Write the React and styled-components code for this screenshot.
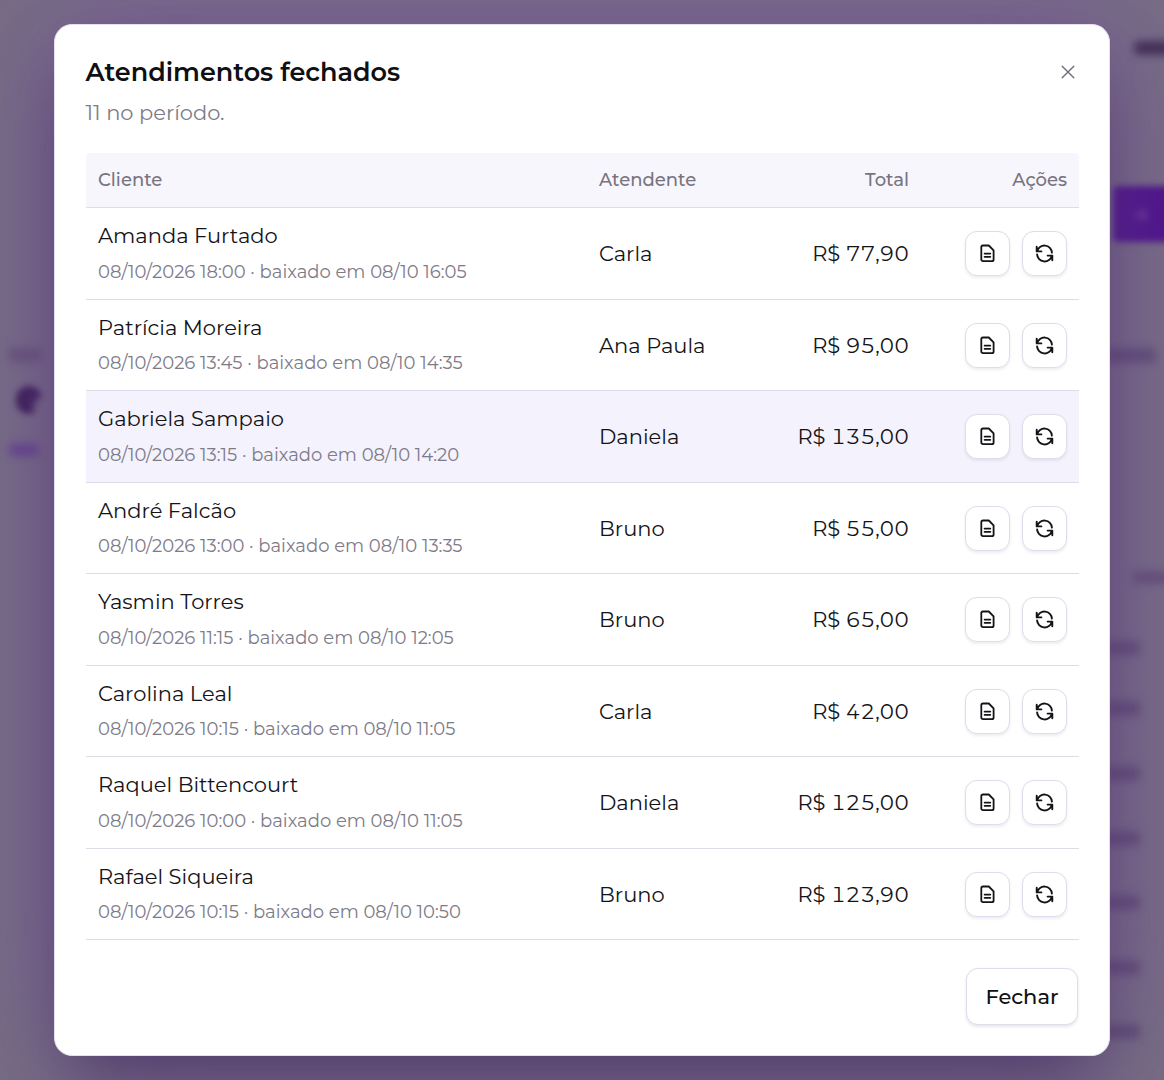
import React from "react";
import styled, { createGlobalStyle } from "styled-components";

const Global = createGlobalStyle`
  * { box-sizing: border-box; }
  html, body { margin: 0; height: 100%; overflow: hidden; }
  body { font-family: Montserrat, Inter, "Open Sans", sans-serif; color: #101013; background: #776e84; }
  button { font: inherit; color: inherit; padding: 0; cursor: pointer; }
`;

const Screen = styled.div`
  display: grid;
  grid-template: 1080px / 1164px;
  overflow: hidden;
  background: #776e84;
`;

const Behind = styled.div`
  grid-area: 1 / 1;
  display: flex;
  justify-content: space-between;
`;

const Edge = styled.div`
  display: flex;
  flex-direction: column;
  width: 60px;
  overflow: hidden;
`;

const Smudge = styled.div`
  flex: none;
  width: ${(p) => p.$w}px;
  height: ${(p) => p.$h}px;
  margin: ${(p) => p.$top}px 0 0 ${(p) => p.$left}px;
  border-radius: ${(p) => p.$r || 5}px;
  background: ${(p) => p.$c || "rgba(66, 38, 92, 0.4)"};
  filter: blur(${(p) => p.$blur || 4}px);
`;

const Dialog = styled.section`
  grid-area: 1 / 1;
  z-index: 1;
  display: flex;
  flex-direction: column;
  width: 1056px;
  height: 1032px;
  margin: 24px 0 0 54px;
  padding: 31px 30px 31px 31px;
  border: 1px solid #e5e0f0;
  border-radius: 18px;
  background: #fff;
  box-shadow:
    0 36px 72px -16px rgba(54, 28, 84, 0.6),
    0 -16px 120px 6px rgba(122, 72, 168, 0.46);

  > * { flex: none; }
`;

const Head = styled.header`
  display: flex;
  justify-content: space-between;
  height: 97px;
  margin-left: -0.5px;
`;

const Title = styled.h2`
  margin: 0;
  font-size: 25.5px;
  font-weight: 600;
  line-height: 32px;
`;

const Subtitle = styled.p`
  margin: 12px 0 0;
  font-size: 21px;
  line-height: 26px;
  color: #7e7b88;
`;

const Close = styled.button`
  display: flex;
  align-items: center;
  justify-content: center;
  width: 22px;
  height: 32px;
  border: 0;
  background: none;
  color: #75717f;
`;

const Table = styled.div`
  display: flex;
  flex-direction: column;
`;

const Row = styled.div`
  display: grid;
  grid-template-columns: 501px 150px 160px 1fr;
  align-items: center;
  height: ${(p) => (p.$header ? 55.2 : 91.5)}px;
  padding: 0 12px;
  border-bottom: 1px solid #dedce7;
  border-radius: ${(p) => (p.$header ? "4px 4px 0 0" : 0)};
  background: ${(p) => (p.$header ? "#f7f6fd" : p.$active ? "#f4f2fc" : "transparent")};
  font-size: ${(p) => (p.$header ? 18 : 21)}px;
  font-weight: ${(p) => (p.$header ? 500 : 400)};
  color: ${(p) => (p.$header ? "#777480" : "#141418")};
`;

const Cell = styled.div`
  display: flex;
  justify-content: ${(p) => (p.$end ? "flex-end" : "flex-start")};
  gap: 12px;
  padding-top: 0.6px;
  font-variant-numeric: tabular-nums;
`;

const Client = styled.div`
  display: flex;
  flex-direction: column;
  gap: 9.5px;
  line-height: 27px;
`;

const Detail = styled.span`
  font-size: 18px;
  line-height: 26px;
  color: #7e7b88;
`;

const IconButton = styled.button`
  display: flex;
  align-items: center;
  justify-content: center;
  width: 45px;
  height: 45px;
  border: 1px solid #e0dcec;
  border-radius: 12px;
  background: #fff;
  box-shadow: 0 1.5px 3px rgba(20, 10, 50, 0.07);
`;

const Foot = styled.footer`
  display: flex;
  justify-content: flex-end;
  padding: 27.4px 1px 0 0;
`;

const FooterButton = styled.button`
  width: 112px;
  height: 57px;
  padding-top: 1px;
  border: 1px solid #e0dcec;
  border-radius: 12px;
  background: #fff;
  box-shadow: 0 1.5px 3px rgba(20, 10, 50, 0.1);
  font-size: 21px;
  font-weight: 500;
`;

const Svg = styled.svg`
  display: block;
  fill: none;
  stroke: currentColor;
  stroke-linecap: round;
  stroke-linejoin: round;
`;

const DocIcon = () => (
  <Svg width="21" height="21" viewBox="0 0 21 21" strokeWidth="1.8">
    <path d="M6 2.5h5.8l4.8 4.9v9a1.7 1.7 0 0 1-1.7 1.7H6a1.7 1.7 0 0 1-1.7-1.7V4.2A1.7 1.7 0 0 1 6 2.5ZM7.6 10.6h5.7M7.6 13.8h5.7" />
  </Svg>
);

const SyncIcon = () => (
  <Svg width="21" height="21" viewBox="0 0 21 21" strokeWidth="1.9">
    <path d="M2.7 3.7v4.7h4.7M3.1 8.2A7.5 7.3 0 0 1 17.9 9.6M18.3 17.3v-4.7h-4.7M17.9 12.8A7.5 7.3 0 0 1 3.1 11.4" />
  </Svg>
);

const rows = [
  ["Amanda Furtado", "08/10/2026 18:00 · baixado em 08/10 16:05", "Carla", "R$ 77,90"],
  ["Patrícia Moreira", "08/10/2026 13:45 · baixado em 08/10 14:35", "Ana Paula", "R$ 95,00"],
  ["Gabriela Sampaio", "08/10/2026 13:15 · baixado em 08/10 14:20", "Daniela", "R$ 135,00"],
  ["André Falcão", "08/10/2026 13:00 · baixado em 08/10 13:35", "Bruno", "R$ 55,00"],
  ["Yasmin Torres", "08/10/2026 11:15 · baixado em 08/10 12:05", "Bruno", "R$ 65,00"],
  ["Carolina Leal", "08/10/2026 10:15 · baixado em 08/10 11:05", "Carla", "R$ 42,00"],
  ["Raquel Bittencourt", "08/10/2026 10:00 · baixado em 08/10 11:05", "Daniela", "R$ 125,00"],
  ["Rafael Siqueira", "08/10/2026 10:15 · baixado em 08/10 10:50", "Bruno", "R$ 123,90"],
];

export default function App() {
  return (
    <Screen>
      <Global />
      <Behind>
        <Edge>
          <Smudge $w={34} $h={14} $top={348} $left={8} $c="rgba(66,38,92,.3)" />
          <Smudge
            $w={26} $h={28} $top={24} $left={16} $r={14} $blur={3}
            $c="radial-gradient(circle at 108% 76%, rgba(58,28,86,0) 20%, rgba(52,24,80,.9) 38%)"
          />
          <Smudge $w={30} $h={12} $top={30} $left={9} $c="rgba(86,36,150,.55)" />
        </Edge>
        <Edge>
          <Smudge $w={40} $h={14} $top={41} $left={30} $c="rgba(45,25,65,.75)" />
          <Smudge
            $w={80} $h={56} $top={131} $left={9} $blur={3}
            $c="radial-gradient(circle at 29px 29px, #642f94 2px, #4c1488 9px)"
          />
          <Smudge $w={52} $h={15} $top={106} $left={0} />
          <Smudge $w={40} $h={13} $top={208} $left={28} $c="rgba(66,38,92,.35)" />
          <Smudge $w={36} $h={14} $top={57} $left={0} />
          {[46, 50, 50, 49, 50, 49].map((top, i) => (
            <Smudge key={i} $w={36} $h={15} $top={top} $left={0} />
          ))}
        </Edge>
      </Behind>
      <Dialog>
        <Head>
          <div>
            <Title>Atendimentos fechados</Title>
            <Subtitle>11 no período.</Subtitle>
          </div>
          <Close aria-label="Fechar">
            <Svg width="14" height="14" viewBox="0 0 14 14" strokeWidth="1.5">
              <path d="m1.2 1.2 11.6 11.6m0-11.6L1.2 12.8" />
            </Svg>
          </Close>
        </Head>
        <Table>
          <Row $header>
            <Cell>Cliente</Cell>
            <Cell>Atendente</Cell>
            <Cell $end>Total</Cell>
            <Cell $end>Ações</Cell>
          </Row>
          {rows.map(([name, detail, staff, total], i) => (
            <Row key={name} $active={i === 2}>
              <Client>
                <span>{name}</span>
                <Detail>{detail}</Detail>
              </Client>
              <Cell>{staff}</Cell>
              <Cell $end>{total}</Cell>
              <Cell $end>
                <IconButton aria-label="Detalhes"><DocIcon /></IconButton>
                <IconButton aria-label="Reabrir"><SyncIcon /></IconButton>
              </Cell>
            </Row>
          ))}
        </Table>
        <Foot>
          <FooterButton>Fechar</FooterButton>
        </Foot>
      </Dialog>
    </Screen>
  );
}
